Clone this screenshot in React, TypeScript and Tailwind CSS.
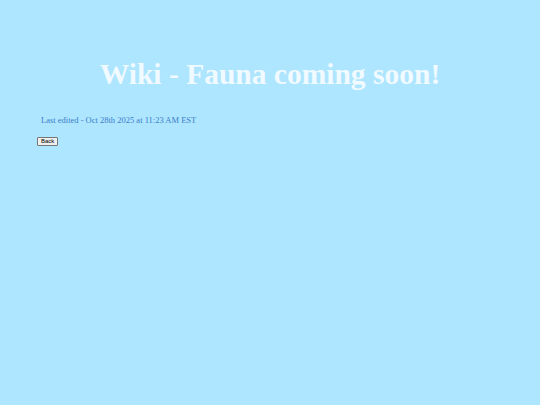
export default function App() {
  return (
    <div className="min-h-[405px] w-full bg-[#aee5ff] pt-[56px] font-['Liberation_Serif',serif]">
      <h1 className="text-center text-[29.5px] font-bold leading-[36px] text-[#f0faff]">
        Wiki - Fauna coming soon!
      </h1>
      <p className="mt-[22px] pl-[41px] text-[8.5px] leading-[12px] text-[#3a80c8]">
        Last edited - Oct 28th 2025 at 11:23 AM EST
      </p>
      <div className="mt-[0px] pl-[37px]">
        <button className="border border-[#767676] bg-[#efefef] px-[3px] text-[6px] leading-[7px] font-['Liberation_Sans',sans-serif] text-black rounded-[1px]">
          Back
        </button>
      </div>
    </div>
  );
}
